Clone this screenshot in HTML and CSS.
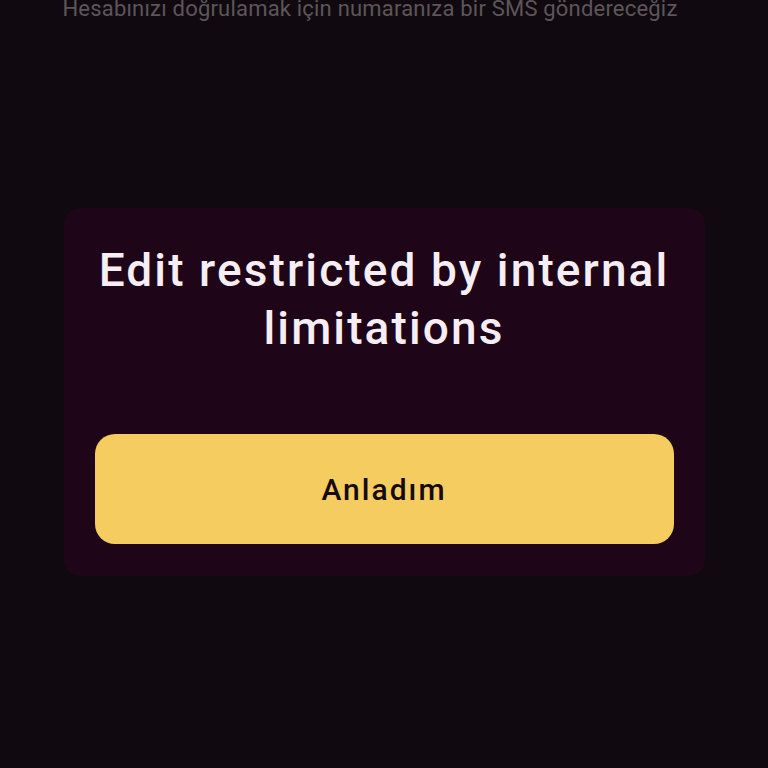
FILE: index.html
```html
<!DOCTYPE html>
<html>
<head>
<meta charset="utf-8">
<link rel="stylesheet" href="styles.css">
</head>
<body>
<div class="screen">
  <p class="subtitle">Hesabınızı doğrulamak için numaranıza bir SMS göndereceğiz</p>
  <div class="dialog">
    <h1 class="title">Edit restricted by internal limitations</h1>
    <button class="btn">Anladım</button>
  </div>
</div>
</body>
</html>
```
FILE: styles.css
```css
html, body {
  margin: 0;
  padding: 0;
  background: #110910;
  font-family: Roboto, "Noto Sans", sans-serif;
}
.screen {
  width: 768px;
  height: 768px;
  display: flex;
  flex-direction: column;
  align-items: center;
  overflow: hidden;
}
.subtitle {
  margin: -6px 28px 0 0;
  font-size: 22px;
  line-height: 30px;
  letter-spacing: 0.2px;
  color: #5c5659;
  text-align: center;
  white-space: nowrap;
}
.dialog {
  margin-top: 184px;
  width: 641px;
  box-sizing: border-box;
  background: #1e0618;
  border-radius: 16px;
  padding: 33px 31px 32px;
  display: flex;
  flex-direction: column;
  align-items: center;
}
.title {
  margin: 0;
  font-size: 46px;
  font-weight: 500;
  line-height: 58px;
  letter-spacing: 2.1px;
  color: #f6eef4;
  text-align: center;
}
.btn {
  margin-top: 77px;
  width: 100%;
  height: 110px;
  border: none;
  border-radius: 20px;
  background: #f4cc60;
  color: #140a10;
  font-family: Roboto, "Noto Sans", sans-serif;
  font-size: 30px;
  font-weight: 500;
  letter-spacing: 2px;
}
```
